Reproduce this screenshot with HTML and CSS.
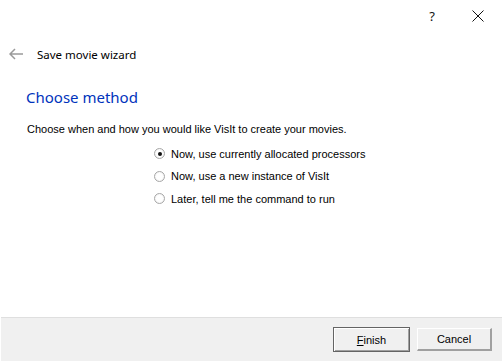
FILE: index.html
```html
<!DOCTYPE html>
<html>
  <head>
    <meta charset="utf-8" />
    <title>Save movie wizard</title>
    <link rel="stylesheet" href="styles.css">
  </head>
  <body>
    <div class="window">
      <div class="titlebar">
        <span class="tb-btn help">?</span>
        <span class="tb-btn close">
          <svg width="12" height="12" viewBox="0 0 12 12"><path d="M0.5 0.5 L11.5 11.5 M11.5 0.5 L0.5 11.5" stroke="#111" stroke-width="1" fill="none"/></svg>
        </span>
      </div>

      <div class="nav">
        <svg class="back" width="14" height="12" viewBox="0 0 14 12"><path d="M6 1 L1 6 L6 11 M1 6 L14 6" stroke="#9a9a9a" stroke-width="1.5" fill="none"/></svg>
        <span class="wizard-title">Save movie wizard</span>
      </div>

      <div class="content">
        <h1 class="heading">Choose method</h1>
        <p class="desc">Choose when and how you would like VisIt to create your movies.</p>

        <div class="options">
          <label class="option"><span class="radio checked"></span>Now, use currently allocated processors</label>
          <label class="option"><span class="radio"></span>Now, use a new instance of VisIt</label>
          <label class="option"><span class="radio"></span>Later, tell me the command to run</label>
        </div>
      </div>

      <div class="footer">
        <button class="btn default"><u>F</u>inish</button>
        <button class="btn">Cancel</button>
      </div>
    </div>
  </body>
</html>
```

FILE: styles.css
```css
html, body {
  margin: 0;
  padding: 0;
  background: #fff;
}

.window {
  width: 502px;
  height: 361px;
  display: flex;
  flex-direction: column;
  font-family: "Liberation Sans", Arial, sans-serif;
  font-size: 11px;
  color: #000;
}

.titlebar {
  height: 32px;
  display: flex;
  justify-content: flex-end;
  align-items: center;
  padding-right: 1px;
}

.tb-btn {
  width: 46px;
  display: flex;
  justify-content: center;
  align-items: center;
}

.help {
  font-family: "Noto Sans", sans-serif;
  font-size: 13px;
  color: #111;
}

.nav {
  height: 44px;
  display: flex;
  align-items: center;
  padding-left: 9px;
}

.back {
  margin-right: 14px;
}

.wizard-title {
  font-family: "Noto Sans", sans-serif;
  font-size: 11.5px;
  color: #000;
}

.content {
  padding-left: 27px;
}

.heading {
  margin: 10px 0 0 -1px;
  font-family: "Noto Sans", sans-serif;
  font-weight: normal;
  font-size: 15px;
  color: #0033bc;
  line-height: 22px;
}

.desc {
  margin: 15px 0 0;
  line-height: 13px;
}

.options {
  margin: 11px 0 0 127px;
  display: flex;
  flex-direction: column;
  gap: 9.5px;
}

.option {
  display: flex;
  align-items: center;
  height: 13px;
}

.radio {
  width: 11px;
  height: 11px;
  box-sizing: border-box;
  border-radius: 50%;
  border: 1px solid #a7a7a7;
  background: radial-gradient(circle, #fff 45%, #e9e9e9 100%);
  margin-right: 6px;
  position: relative;
}

.radio.checked::after {
  content: "";
  position: absolute;
  left: 2.5px;
  top: 2.5px;
  width: 4px;
  height: 4px;
  border-radius: 50%;
  background: #111;
}

.footer {
  margin-top: auto;
  margin-left: 1px;
  height: 43px;
  border-top: 1px solid #dfdfdf;
  background: #f0f0f0;
  display: flex;
  justify-content: flex-end;
  align-items: center;
  gap: 7px;
  padding-right: 10px;
}

.btn {
  width: 75px;
  height: 23px;
  font-family: "Liberation Sans", Arial, sans-serif;
  font-size: 11px;
  color: #000;
  background: #f0f0f0;
  border-style: solid;
  border-width: 1px 2px 2px 1px;
  border-color: #fff #a0a0a0 #a0a0a0 #fff;
  padding: 0;
}

.btn.default {
  width: 77px;
  height: 25px;
  outline: none;
  border: 1px solid #646464;
  box-shadow: inset 1px 1px #fff, inset -1px -1px #a0a0a0;
}
```
